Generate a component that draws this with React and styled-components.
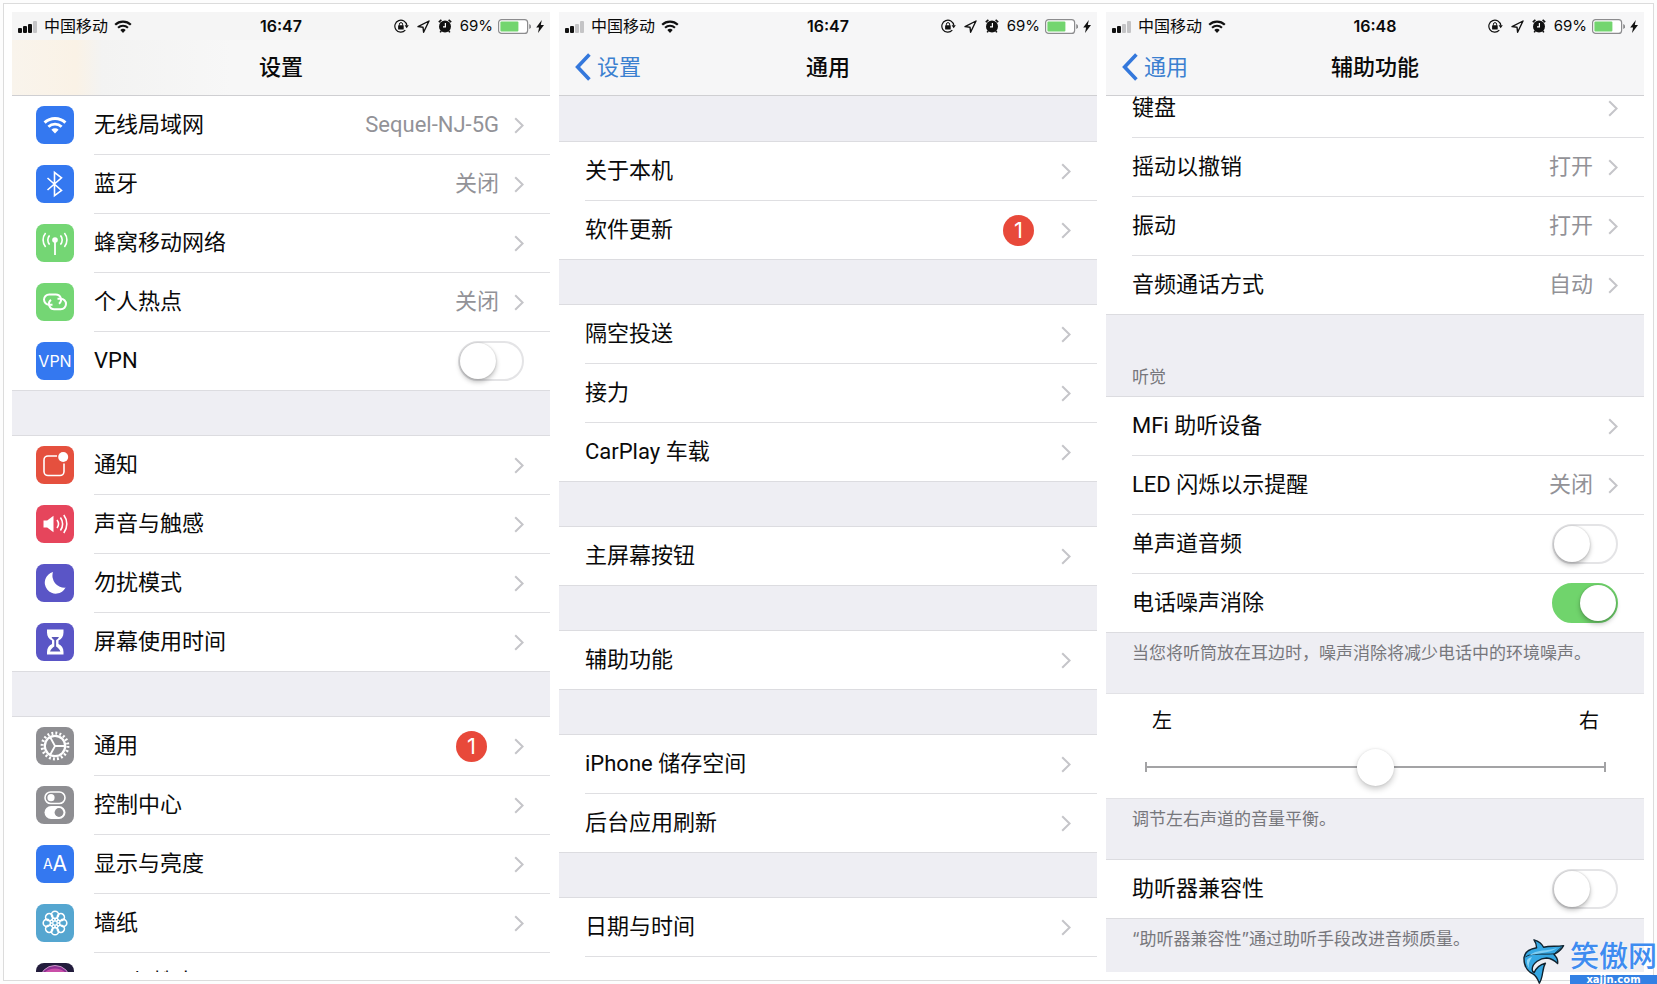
import React from "react";
import styled, { createGlobalStyle, css } from "styled-components";

const GlobalStyle = createGlobalStyle`
  * {
    box-sizing: border-box;
  }

  body {
    margin: 0;
    background: #fdfdfd;
    color: #0a0a0a;
    font-family: Inter, "Noto Sans CJK SC", sans-serif;
    font-size: 22px;
  }
`;

const Page = styled.div`
  position: relative;
  display: flex;
  height: 100vh;
  padding: 3px;
  overflow: hidden;
`;

const Board = styled.main`
  flex: 1;
  display: grid;
  grid-template-columns: repeat(3, 1fr);
  gap: 9px;
  padding: 8px 9px 8px 8px;
  border: 1px solid #dcdcdc;
  background: #fff;
`;

const Screen = styled.section`
  display: flex;
  flex-direction: column;
  min-height: 0;
  overflow: hidden;
  background: #eeeef3;
`;

const Header = styled.header`
  position: relative;
  flex: none;
  height: 84px;
  border-bottom: 1px solid #cfcfd2;
  background: ${({ $tinted }) =>
    $tinted
      ? "linear-gradient(90deg, #f9f4ec 0, #faf2e6 64px, #f3f3f2 90px, #f7f7f7 220px)"
      : "#f6f6f7"};
`;

const StatusBar = styled.div`
  display: grid;
  grid-template-columns: 1fr auto 1fr;
  align-items: center;
  height: 28px;
  padding: 0 6px;
  background: ${({ $tinted }) => ($tinted ? "#f5f5f5" : "transparent")};
  font-size: 16px;
  line-height: 20px;
`;

const StatusSide = styled.div`
  display: flex;
  align-items: center;
  justify-content: ${({ $end }) => ($end ? "flex-end" : "flex-start")};
  gap: ${({ $end }) => ($end ? "8px" : "6px")};
`;

const BatteryGroup = styled.span`
  display: flex;
  align-items: center;
  gap: 5px;
  font-size: 15px;
`;

const Time = styled.time`
  font-weight: 600;
`;

const NavBar = styled.nav`
  display: grid;
  grid-template-columns: 1fr auto 1fr;
  align-items: center;
  height: 54px;
  padding: 0 16px;
`;

const Title = styled.h1`
  grid-column: 2;
  margin: 0;
  font-size: 22px;
  font-weight: 500;
  line-height: 28px;
`;

const BackLink = styled.a`
  display: flex;
  align-items: center;
  gap: 6px;
  color: #3b80d0;
  line-height: 28px;
  text-decoration: none;
`;

const Content = styled.div`
  flex: 1;
  min-height: 0;
  overflow: hidden;
`;

const Group = styled.section`
  margin-top: ${({ $flush }) => ($flush ? "0" : "46px")};
`;

const GroupTitle = styled.h2`
  margin: 0;
  padding: 53px 26px 10px;
  color: #77777c;
  font-size: 17px;
  font-weight: 400;
  line-height: 20px;
`;

const GroupNote = styled.p`
  margin: 0;
  padding: 11px 26px 31px;
  color: #77777c;
  font-size: 17px;
  line-height: 20px;
`;

const List = styled.ul`
  margin: 0;
  padding: 0;
  list-style: none;
  background: #fff;
  box-shadow: 0 0 0 1px #dcdce0;
  ${({ $scrolled }) =>
    $scrolled &&
    css`
      margin-top: -17px;
    `}
`;

const RowBody = styled.span`
  flex: 1;
  display: flex;
  align-items: center;
  height: 58px;
  padding-right: 26px;
`;

const rowLayout = css`
  display: flex;
  align-items: center;
  gap: 20px;
  padding-left: ${({ $icon }) => ($icon ? "24px" : "26px")};
  color: inherit;
  text-decoration: none;
`;

const RowLink = styled.a`
  ${rowLayout}
`;

const RowLabel = styled.label`
  ${rowLayout}
`;

const RowBlank = styled.div`
  ${rowLayout}
`;

const Item = styled.li`
  & + & ${RowBody} {
    height: 59px;
    border-top: 1px solid #dfdfe2;
  }
`;

const Label = styled.span`
  flex: 1;
  font-family: Roboto, "Noto Sans CJK SC", sans-serif;
  line-height: 30px;
`;

const Value = styled.span`
  margin-right: 15px;
  color: #929297;
  font-family: Roboto, "Noto Sans CJK SC", sans-serif;
  line-height: 30px;
`;

const Badge = styled.span`
  display: flex;
  align-items: center;
  justify-content: center;
  width: 31px;
  height: 31px;
  margin-right: 27px;
  border-radius: 50%;
  background: #e8493a;
  color: #fff;
`;

const Tile = styled.span`
  display: flex;
  align-items: center;
  justify-content: center;
  flex: none;
  width: 38px;
  height: 38px;
  border-radius: 8px;
  overflow: hidden;
  background: ${({ $color }) => $color};
`;

const TileText = styled.span`
  color: #fff;
  font-size: ${({ $size }) => $size}px;
  line-height: 24px;
`;

const Switch = styled.input`
  appearance: none;
  display: flex;
  flex: none;
  width: 66px;
  height: 40px;
  margin: 0;
  border: 2px solid #e4e4e6;
  border-radius: 20px;
  background: #fff;

  &::before {
    content: "";
    width: 36px;
    height: 36px;
    border-radius: 50%;
    background: #fff;
    box-shadow: 0 3px 5px rgba(0, 0, 0, 0.25), 0 0 2px rgba(0, 0, 0, 0.2);
  }

  &:checked {
    justify-content: flex-end;
    border-color: #70d46c;
    background: #70d46c;
  }
`;

const BalancePanel = styled.div`
  height: 104px;
  padding: 13px 38px 0 39px;
  background: #fff;
  box-shadow: 0 0 0 1px #e2e2e6;
`;

const BalanceLabels = styled.div`
  display: flex;
  justify-content: space-between;
  padding: 0 7px;
  font-size: 20px;
  line-height: 28px;
`;

const Slider = styled.input`
  appearance: none;
  display: block;
  width: 100%;
  height: 40px;
  margin: 12px 0 0;
  background: linear-gradient(#a3a3a5, #a3a3a5) left / 2px 10px no-repeat,
    linear-gradient(#a3a3a5, #a3a3a5) right / 2px 10px no-repeat,
    linear-gradient(#a3a3a5, #a3a3a5) center / 100% 2px no-repeat;

  &::-webkit-slider-thumb {
    appearance: none;
    width: 37px;
    height: 37px;
    border-radius: 50%;
    background: #fff;
    box-shadow: 0 3px 6px rgba(0, 0, 0, 0.22), 0 0 2px rgba(0, 0, 0, 0.1);
  }
`;

const Watermark = styled.div`
  position: absolute;
  right: 0;
  bottom: 0;
  display: flex;
  align-items: flex-end;
  gap: 5px;
`;

const WatermarkName = styled.div`
  color: #3f8cf0;
  font-size: 29px;
  font-weight: 500;
  line-height: 36px;
  text-shadow: 0 0 2px #fff;
`;

const WatermarkSite = styled.div`
  background: #3280e4;
  color: #fff;
  font-family: "DejaVu Sans", sans-serif;
  font-size: 10px;
  font-weight: 700;
  line-height: 9px;
  text-align: center;
`;

/* Status bar glyphs */

const Signal = ({ bars }) => (
  <svg width="20" height="13" viewBox="0 0 20 13" aria-hidden="true">
    {[5, 7, 9, 12].map((h, i) => (
      <rect
        key={h}
        x={i * 5}
        y={13 - h}
        width="4"
        height={h}
        rx="1"
        fill={i < bars ? "#111" : "#c4c4c6"}
      />
    ))}
  </svg>
);

const WifiShape = ({ width, height, color }) => (
  <svg width={width} height={height} viewBox="0 0 24 17" aria-hidden="true">
    <path d="M1.6 6.2a15 15 0 0 1 20.8 0" fill="none" stroke={color} strokeWidth="3" />
    <path d="M5.4 10.2a9.6 9.6 0 0 1 13.2 0" fill="none" stroke={color} strokeWidth="2.8" />
    <path d="M8.4 13.2a5.2 5.2 0 0 1 7.2 0L12 17z" fill={color} />
  </svg>
);

const RotationLock = () => (
  <svg width="15" height="14" viewBox="0 0 15 14" aria-hidden="true">
    <path
      d="M11.3 11.2A6 6 0 1 1 12.8 6.4"
      fill="none"
      stroke="#111"
      strokeWidth="1.2"
    />
    <path d="M10.6 6.2h4.2l-2.1 3z" fill="#111" />
    <rect x="4.1" y="6.2" width="5.6" height="4.4" rx=".6" fill="#111" />
    <path d="M5.4 6.6V5.2a1.6 1.6 0 0 1 3.2 0v1.4" fill="none" stroke="#111" />
  </svg>
);

const LocationArrow = () => (
  <svg width="13" height="13" viewBox="0 0 13 13" aria-hidden="true">
    <path
      d="M12 1 1 6.6l5 .6.6 5z"
      fill="none"
      stroke="#111"
      strokeWidth="1.4"
      strokeLinejoin="round"
    />
  </svg>
);

const AlarmClock = () => (
  <svg width="14" height="14" viewBox="0 0 14 14" aria-hidden="true">
    <circle cx="7" cy="7.4" r="6" fill="#111" />
    <path
      d="M.8 3.2 3.4.8M13.2 3.2 10.6.8M3.2 11.8l-1 1.600M10.800 11.800l1 1.600"
      stroke="#111"
      strokeWidth="1.6"
    />
    <path d="M7.400 4v3.800H5" fill="none" stroke="#fff" strokeWidth="1.2" />
  </svg>
);

const Battery = () => (
  <svg width="33" height="15" viewBox="0 0 33 15" aria-hidden="true">
    <rect x=".6" y=".6" width="29" height="13.8" rx="3" fill="#fff" stroke="#8c8c8e" strokeWidth="1.2" />
    <rect x="2.4" y="2.4" width="18" height="10.2" rx="1" fill="#73d56f" />
    <path d="M31.2 5v5a2.6 2.6 0 0 0 0-5z" fill="#8c8c8e" />
  </svg>
);

const Bolt = () => (
  <svg width="8" height="13" viewBox="0 0 8 13" aria-hidden="true">
    <path d="M5.8 0 .2 7.600h2.900L2 13l6-8H4.800z" fill="#111" />
  </svg>
);

/* Row glyphs */

const Chevron = () => (
  <svg width="10" height="17" viewBox="0 0 10 17" aria-hidden="true">
    <path d="M1.2 1.2 8.6 8.5l-7.4 7.3" fill="none" stroke="#c5c5c9" strokeWidth="2" />
  </svg>
);

const BackChevron = () => (
  <svg width="16" height="28" viewBox="0 0 16 28" aria-hidden="true">
    <path d="M14.4 1.6 2.6 14l11.800 12.4" fill="none" stroke="#3478dc" strokeWidth="3.6" />
  </svg>
);

const Glyph = ({ children }) => (
  <svg
    width="38"
    height="38"
    viewBox="0 0 38 38"
    fill="none"
    stroke="#fff"
    strokeWidth="1.6"
    aria-hidden="true"
  >
    {children}
  </svg>
);

const BluetoothGlyph = () => (
  <Glyph>
    <path d="m11.5 13 14 12.4-7 5.2V7.4l7 5.4-14 12.2" />
  </Glyph>
);

const CellularGlyph = () => (
  <Glyph>
    <circle cx="19" cy="16" r="2.8" fill="#fff" stroke="none" />
    <path d="M19 16v15" strokeWidth="1.8" />
    <path d="M13.6 20.6a6.8 6.8 0 0 1 0-9.2M24.4 20.6a6.8 6.8 0 0 0 0-9.2" />
    <path d="M9.6 23a11 11 0 0 1 0-14M28.4 23a11 11 0 0 0 0-14" />
  </Glyph>
);

const HotspotGlyph = () => (
  <Glyph>
    <path
      d="M16.500 21.800h-3.300a5.200 5.200 0 0 1 0-10.400h6.600a5.200 5.200 0 0 1 3.200 9.300"
      strokeWidth="2"
    />
    <path
      d="M21.500 15.800h3.300a5.200 5.200 0 0 1 0 10.400h-6.600a5.200 5.200 0 0 1-3.200-9.300"
      strokeWidth="2"
    />
  </Glyph>
);

const NotificationGlyph = () => (
  <Glyph>
    <path d="M21 10h-9a4 4 0 0 0-4 4v11.5a4 4 0 0 0 4 4h12a4 4 0 0 0 4-4V17.5" />
    <circle cx="27.2" cy="11" r="5" fill="#fff" stroke="none" />
  </Glyph>
);

const SoundGlyph = () => (
  <Glyph>
    <path d="M7.5 15.500h3.700l6.300-4.700v16.400l-6.300-4.700H7.500z" fill="#fff" stroke="none" />
    <path d="M21 15a6.600 6.600 0 0 1 0 8M24.400 12.400a11 11 0 0 1 0 13.200M27.800 10a15 15 0 0 1 0 18" />
  </Glyph>
);

const MoonGlyph = () => (
  <Glyph>
    <path
      d="M17 8A11 11 0 1 0 29.6 23.6 12 12 0 0 1 17 8z"
      fill="#fff"
      stroke="none"
    />
  </Glyph>
);

const HourglassGlyph = () => (
  <Glyph>
    <path
      d="M11 6.5h16.500v3c0 4-2 6.500-5 8v3.500c3 1.500 5 4 5 8v2.500H11V29c0-4 2-6.500 5-8v-3.500c-3-1.500-5-4-5-8z"
      fill="#fff"
      stroke="none"
    />
    <path
      d="M15.500 14h7.500c-.8 1.600-1.800 2.400-2.900 3.200v6.200c2 1.200 3.600 3 4.300 5H14c.8-2 2.300-3.800 4.300-5v-6.200c-1.100-.8-2-1.600-2.800-3.200z"
      fill="#5a57b8"
      stroke="none"
    />
  </Glyph>
);

const GearGlyph = () => (
  <Glyph>
    <circle cx="19" cy="19" r="10.2" strokeWidth="2.2" />
    <circle cx="19" cy="19" r="12.9" strokeWidth="3" strokeDasharray="1.900 2.153" />
    <path d="m19 19-4.800-8.800M19 19h10M19 19l-4.800 8.800" strokeWidth="1.8" />
  </Glyph>
);

const ControlGlyph = () => (
  <Glyph>
    <rect x="9" y="6" width="20" height="11.5" rx="5.7" />
    <circle cx="15" cy="11.7" r="3.6" fill="#fff" stroke="none" />
    <rect x="8.5" y="20" width="21" height="13" rx="6.5" fill="#fff" stroke="none" />
    <circle cx="23" cy="26.5" r="4.4" fill="#8e8e92" stroke="none" />
  </Glyph>
);

const FlowerGlyph = () => (
  <Glyph>
    {[0, 45, 90, 135, 180, 225, 270, 315].map((angle) => (
      <g key={angle} transform={`rotate(${angle} 19 19)`}>
        <circle cx="19" cy="10.800" r="3.600" strokeWidth="1.6" />
        <path d="M19 14.400v2.400" />
      </g>
    ))}
    <circle cx="19" cy="19" r="2.2" strokeWidth="1.2" />
  </Glyph>
);

const SiriGlyph = () => (
  <Glyph>
    <circle cx="19" cy="18" r="15.5" fill="#8c2f92" stroke="#c79ac6" strokeWidth="1" />
    <path d="M9 12c5-6 15-6 20 0" stroke="#c94fa8" strokeWidth="4" />
  </Glyph>
);

const Dolphin = () => (
  <svg width="42" height="45" viewBox="0 0 42 45" aria-hidden="true">
    <path
      d="M11 .8c4 1.200 8 4 9.600 7.400 7-1.600 13-.2 20-1.600-2.400 4.400-6 7-9.600 8.800 2.800 2.600 4.200 5.600 3.600 9.200-3.400-3.600-7-5.200-11-5.600-6 .2-14.400 4.600-14.400 11.400 0 1.400.8 2.600 2 3.200 2-5 6-8 11.200-9.400-3.600 6.200-1.800 13-6 20-1.600-4.200-3-7.600-6.600-9.400C4 32 .8 26 1 18.600 1.600 13 7 10 13.600 8.800 13.400 5.600 12.600 3 11 .8z"
      fill="#35a7e3"
      stroke="#10222e"
      strokeWidth="1.4"
      strokeLinejoin="round"
    />
    <path d="M2.4 18c6-4.600 18-2 29-3.200l7-6.600" fill="none" stroke="#10222e" strokeWidth=".9" />
    <path d="M6 16.400c8-6.400 18-4 28-7.400-4 3.800-16 5.200-28 7.400z" fill="#7fcdf2" />
    <path d="M4 21c1-1.600 3-2.600 5-3-2.600 4-4 7.400-3 11-1.600-2.400-2.400-5.200-2-8z" fill="#8fd6f4" />
  </svg>
);

const settings = [
  {
    flush: true,
    rows: [
      {
        label: "无线局域网",
        value: "Sequel-NJ-5G",
        color: "#3478f0",
        icon: <WifiShape width="24" height="18" color="#fff" />,
      },
      { label: "蓝牙", value: "关闭", color: "#3478f0", icon: <BluetoothGlyph /> },
      { label: "蜂窝移动网络", color: "#74d674", icon: <CellularGlyph /> },
      { label: "个人热点", value: "关闭", color: "#74d674", icon: <HotspotGlyph /> },
      {
        label: "VPN",
        toggle: "off",
        color: "#3478f0",
        icon: <TileText $size={16}>VPN</TileText>,
      },
    ],
  },
  {
    rows: [
      { label: "通知", color: "#e5503e", icon: <NotificationGlyph /> },
      { label: "声音与触感", color: "#e6455c", icon: <SoundGlyph /> },
      { label: "勿扰模式", color: "#5a55c6", icon: <MoonGlyph /> },
      { label: "屏幕使用时间", color: "#5a55c6", icon: <HourglassGlyph /> },
    ],
  },
  {
    rows: [
      { label: "通用", badge: 1, color: "#8e8e92", icon: <GearGlyph /> },
      { label: "控制中心", color: "#8e8e92", icon: <ControlGlyph /> },
      {
        label: "显示与亮度",
        color: "#3478f0",
        icon: (
          <>
            <TileText $size={14}>A</TileText>
            <TileText $size={21}>A</TileText>
          </>
        ),
      },
      { label: "墙纸", color: "#55a6d0", icon: <FlowerGlyph /> },
      { label: "Siri 与搜索", color: "#221c3c", icon: <SiriGlyph /> },
    ],
  },
];

const general = [
  { rows: [{ label: "关于本机" }, { label: "软件更新", badge: 1 }] },
  { rows: [{ label: "隔空投送" }, { label: "接力" }, { label: "CarPlay 车载" }] },
  { rows: [{ label: "主屏幕按钮" }] },
  { rows: [{ label: "辅助功能" }] },
  { rows: [{ label: "iPhone 储存空间" }, { label: "后台应用刷新" }] },
  { rows: [{ label: "日期与时间" }], open: true },
];

const interaction = {
  flush: true,
  scrolled: true,
  rows: [
    { label: "键盘" },
    { label: "摇动以撤销", value: "打开" },
    { label: "振动", value: "打开" },
    { label: "音频通话方式", value: "自动" },
  ],
};

const hearing = {
  flush: true,
  title: "听觉",
  note: "当您将听筒放在耳边时，噪声消除将减少电话中的环境噪声。",
  rows: [
    { label: "MFi 助听设备" },
    { label: "LED 闪烁以示提醒", value: "关闭" },
    { label: "单声道音频", toggle: "off" },
    { label: "电话噪声消除", toggle: "on" },
  ],
};

const hearingAid = {
  flush: true,
  note: "“助听器兼容性”通过助听手段改进音频质量。",
  rows: [{ label: "助听器兼容性", toggle: "off" }],
};

const Row = ({ label, value, badge, toggle, icon, color }) => {
  const tile = icon && <Tile $color={color}>{icon}</Tile>;

  return (
    <Item>
      {toggle ? (
        <RowLabel $icon={Boolean(icon)}>
          {tile}
          <RowBody>
            <Label>{label}</Label>
            <Switch type="checkbox" defaultChecked={toggle === "on"} />
          </RowBody>
        </RowLabel>
      ) : (
        <RowLink href="#" $icon={Boolean(icon)}>
          {tile}
          <RowBody>
            <Label>{label}</Label>
            {value && <Value>{value}</Value>}
            {badge && <Badge>{badge}</Badge>}
            <Chevron />
          </RowBody>
        </RowLink>
      )}
    </Item>
  );
};

// An open group runs on past its last row, with an empty row below it
const SettingsGroup = ({ rows, title, note, flush, scrolled, open }) => (
  <Group $flush={flush}>
    {title && <GroupTitle>{title}</GroupTitle>}
    <List $scrolled={scrolled}>
      {rows.map((row) => (
        <Row key={row.label} {...row} />
      ))}
      {open && (
        <Item aria-hidden="true">
          <RowBlank>
            <RowBody />
          </RowBlank>
        </Item>
      )}
    </List>
    {note && <GroupNote>{note}</GroupNote>}
  </Group>
);

const Phone = ({ title, back, time, bars, tinted, children }) => (
  <Screen>
    <Header $tinted={tinted}>
      <StatusBar $tinted={tinted}>
        <StatusSide>
          <Signal bars={bars} />
          <span>中国移动</span>
          <WifiShape width="18" height="13" color="#111" />
        </StatusSide>
        <Time>{time}</Time>
        <StatusSide $end>
          <RotationLock />
          <LocationArrow />
          <AlarmClock />
          <BatteryGroup>
            69%
            <Battery />
            <Bolt />
          </BatteryGroup>
        </StatusSide>
      </StatusBar>
      <NavBar>
        {back && (
          <BackLink href="#">
            <BackChevron />
            {back}
          </BackLink>
        )}
        <Title>{title}</Title>
      </NavBar>
    </Header>
    <Content>{children}</Content>
  </Screen>
);

const App = () => (
  <>
    <GlobalStyle />
    <Page>
      <Board>
        <Phone title="设置" time="16:47" bars={3} tinted>
          {settings.map((group) => (
            <SettingsGroup key={group.rows[0].label} {...group} />
          ))}
        </Phone>
        <Phone title="通用" back="设置" time="16:47" bars={2}>
          {general.map((group) => (
            <SettingsGroup key={group.rows[0].label} {...group} />
          ))}
        </Phone>
        <Phone title="辅助功能" back="通用" time="16:48" bars={2}>
          <SettingsGroup {...interaction} />
          <SettingsGroup {...hearing} />
          <BalancePanel>
            <BalanceLabels>
              <label htmlFor="balance">左</label>
              <label htmlFor="balance">右</label>
            </BalanceLabels>
            <Slider id="balance" type="range" min="-50" max="50" defaultValue="0" />
          </BalancePanel>
          <GroupNote>调节左右声道的音量平衡。</GroupNote>
          <SettingsGroup {...hearingAid} />
        </Phone>
      </Board>
      <Watermark>
        <Dolphin />
        <div>
          <WatermarkName>笑傲网</WatermarkName>
          <WatermarkSite>xajjn.com</WatermarkSite>
        </div>
      </Watermark>
    </Page>
  </>
);

export default App;
